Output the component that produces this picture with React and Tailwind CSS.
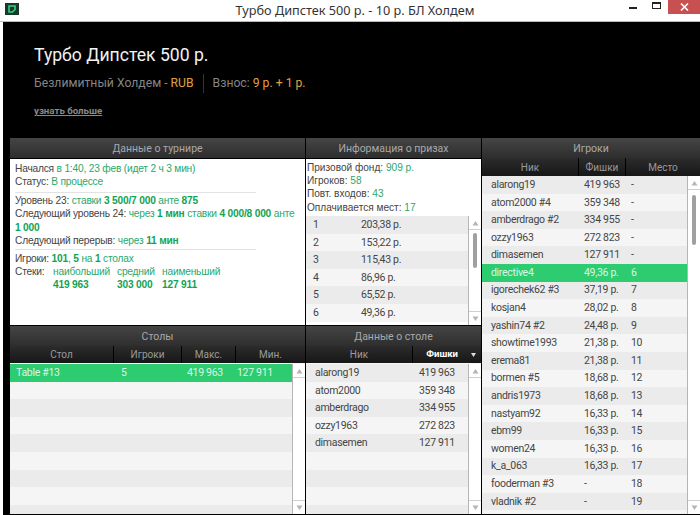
import React from "react";

const G = ({ children }) => <span className="text-[#2aa86c]">{children}</span>;
const B = ({ children }) => <span className="text-[#12a352] font-bold whitespace-nowrap">{children}</span>;

function PanelHeader({ children }) {
  return (
    <div className="h-5 shrink-0 flex items-center justify-center bg-gradient-to-b from-[#454545] to-[#2e2e2e] text-[#a9a9a9] text-[10.5px] pt-px">
      {children}
    </div>
  );
}

function ColHead({ cols, h = "h-[17px]" }) {
  return (
    <div className={`${h} shrink-0 flex bg-gradient-to-b from-[#2c2c2c] to-[#171717] text-[#9a9a9a] text-[10px]`}>
      {cols.map((c, i) => (
        <div key={i} className={`${c.w} flex items-center justify-center border-r border-black last:border-r-0 ${c.cls || ""}`}>
          {c.label}
        </div>
      ))}
    </div>
  );
}

function Scrollbar({ thumb, pt = "pt-[3px]" }) {
  return (
    <div className="w-[13px] shrink-0 bg-white border-l border-[#b5b5b5] flex flex-col">
      <div className="h-[14px] shrink-0 border-b border-[#cfcfcf] flex items-center justify-center text-[#b5b5b5]">
        <svg width="7" height="6"><path d="M3.5 1 L6.5 5.5 L0.5 5.5 Z" fill="currentColor" /></svg>
      </div>
      <div className={`flex-1 min-h-0 px-[4px] ${pt}`}>
        {thumb ? <div className={`${thumb} rounded-[3px] bg-[#a0a0a0]`} /> : null}
      </div>
      <div className="h-[14px] shrink-0 border-t border-[#cfcfcf] flex items-center justify-center text-[#b5b5b5]">
        <svg width="7" height="6"><path d="M0.5 0.5 L6.5 0.5 L3.5 5 Z" fill="currentColor" /></svg>
      </div>
    </div>
  );
}

function Rows({ rows, cols, n, rowH = "h-[17.6px]" }) {
  const list = [];
  for (let i = 0; i < n; i++) list.push(rows[i] || null);
  return (
    <div className="flex-1 min-w-0 overflow-hidden">
      {list.map((r, i) => {
        const sel = r && r.sel;
        const bg = sel ? "bg-[#2ecc71] text-[#d9f7e4]" : i % 2 === 0 ? "bg-[#ebebeb] text-[#454545]" : "bg-[#f5f5f5] text-[#454545]";
        return (
          <div key={i} className={`${rowH} flex items-center text-[10.5px] tracking-[-0.3px] ${bg}`}>
            {r ? r.c.map((t, j) => (
              <div key={j} className={`${cols[j]} whitespace-nowrap`}>{t}</div>
            )) : null}
          </div>
        );
      })}
    </div>
  );
}

const playerData = [
  ["alarong19", "419 963", "-"],
  ["atom2000 #4", "359 348", "-"],
  ["amberdrago #2", "334 955", "-"],
  ["ozzy1963", "272 823", "-"],
  ["dimasemen", "127 911", "-"],
  ["directive4", "49,36 р.", "6"],
  ["igorechek62 #3", "37,19 р.", "7"],
  ["kosjan4", "28,02 р.", "8"],
  ["yashin74 #2", "24,48 р.", "9"],
  ["showtime1993", "21,38 р.", "10"],
  ["erema81", "21,38 р.", "11"],
  ["bormen #5", "18,68 р.", "12"],
  ["andris1973", "18,68 р.", "13"],
  ["nastyam92", "16,33 р.", "14"],
  ["ebm99", "16,33 р.", "15"],
  ["women24", "16,33 р.", "16"],
  ["k_a_063", "16,33 р.", "17"],
  ["fooderman #3", "-", "18"],
  ["vladnik #2", "-", "19"],
].map((c, i) => ({ c, sel: i === 5 }));

const prizes = [
  ["1", "203,38 р."],
  ["2", "153,22 р."],
  ["3", "115,43 р."],
  ["4", "86,96 р."],
  ["5", "65,52 р."],
  ["6", "49,36 р."],
].map((c) => ({ c }));

const seats = [
  ["alarong19", "419 963"],
  ["atom2000", "359 348"],
  ["amberdrago", "334 955"],
  ["ozzy1963", "272 823"],
  ["dimasemen", "127 911"],
].map((c) => ({ c }));

export default function App() {
  return (
    <div className="w-[700px] h-[515px] overflow-hidden flex flex-col bg-white font-['Roboto',sans-serif]">
      <div className="h-[22px] shrink-0 relative flex items-center justify-center bg-white border-b border-[#b9b9b9] pl-[10px]">
        <span className="text-[12.7px] text-[#333] font-['Noto_Sans',sans-serif]">Турбо Дипстек 500 р. - 10 р. БЛ Холдем</span>
        <svg className="absolute left-[5px] top-[3px]" width="14" height="12" viewBox="0 0 14 12">
          <rect width="14" height="12" fill="#173a2a" />
          <path d="M4 3 H10 V6.5 L7.5 9 H4 Z" fill="none" stroke="#35d07f" strokeWidth="1.6" />
        </svg>
        <svg className="absolute left-[629px] top-[6px]" width="8" height="3"><rect y="1" width="8" height="2" fill="#222" /></svg>
        <svg className="absolute left-[652px] top-[2px]" width="10" height="8"><rect x="0.5" y="0.5" width="8" height="6" fill="none" stroke="#222" strokeWidth="1" /><rect x="0" y="0" width="9" height="2" fill="#222" /></svg>
        <div className="absolute right-0 top-0 w-[32px] h-[14px] bg-[#c75050] flex items-center justify-center">
          <svg width="9" height="8" viewBox="0 0 9 8"><path d="M1 0.5 L8 7.5 M8 0.5 L1 7.5" stroke="#fff" strokeWidth="1.6" /></svg>
        </div>
      </div>

      <div className="flex-1 min-h-0 flex flex-col ml-[3px] bg-black pb-[1px]">
        <div className="h-[116px] shrink-0 pl-[31px] pt-[21px]">
          <div className="text-[17.6px] leading-[24px] text-[#f2f2f2]">Турбо Дипстек 500 р.</div>
          <div className="mt-[7px] flex items-center text-[12.2px] h-[19px] text-[#858585]">
            <span>Безлимитный Холдем -&nbsp;</span>
            <span className="text-[#e0a040]">RUB</span>
            <span className="mx-[9px] w-px h-[19px] bg-[#333]" />
            <span>Взнос:&nbsp;</span>
            <span className="text-[#e0a040]">9 р. + 1 р.</span>
          </div>
          <div className="mt-[11px] text-[9.7px] font-bold text-[#8a8a8a] underline">узнать больше</div>
        </div>

        <div className="flex-1 min-h-0 flex pl-[7px] gap-px">
          <div className="w-[295px] shrink-0 flex flex-col">
            <PanelHeader>Данные о турнире</PanelHeader>
            <div className="h-[167px] shrink-0 bg-white px-[5px] pt-[3px] text-[10.2px] tracking-[-0.2px] leading-[13.3px] text-[#444] font-['Liberation_Sans',sans-serif] border-t border-black">
              <div>Начался <G>в 1:40, 23 фев (идет 2 ч 3 мин)</G></div>
              <div>Статус: <G>В процессе</G></div>
              <div className="w-[241px] h-px bg-[#e2e2e2] mt-[3px] mb-[1.5px]" />
              <div>Уровень 23: <G>ставки</G> <B>3 500/7 000</B> <G>анте</G> <B>875</B></div>
              <div>Следующий уровень 24: <G>через</G> <B>1 мин</B> <G>ставки</G> <B>4 000/8 000</B> <G>анте</G> <B>1 000</B></div>
              <div>Следующий перерыв: <G>через</G> <B>11 мин</B></div>
              <div className="w-[241px] h-px bg-[#e2e2e2] mt-[2px] mb-[1.5px]" />
              <div>Игроки: <B>101</B><G>,</G> <B>5</B> <G>на</G> <B>1</B> <G>столах</G></div>
              <div className="flex">
                <div className="w-[38px]">Стеки:</div>
                <div className="w-[64px]"><G>наибольший</G><br /><B>419 963</B></div>
                <div className="w-[45px]"><G>средний</G><br /><B>303 000</B></div>
                <div><G>наименьший</G><br /><B>127 911</B></div>
              </div>
            </div>
            <div className="h-px shrink-0 bg-black" />
            <PanelHeader>Столы</PanelHeader>
            <ColHead cols={[
              { w: "w-[104px]", label: "Стол" },
              { w: "w-[68px]", label: "Игроки" },
              { w: "w-[54px]", label: "Макс." },
              { w: "flex-1", label: "Мин." },
            ]} />
            <div className="flex-1 min-h-0 flex pt-px bg-[#f5f5f5]">
              <Rows
                n={9}
                rows={[{ sel: true, c: ["Table #13", "5", "419 963", "127 911"] }]}
                cols={["w-[111px] pl-[6px]", "w-[66px]", "w-[50px]", "w-[46px]"]}
              />
              <Scrollbar />
            </div>
          </div>

          <div className="w-[175px] shrink-0 flex flex-col">
            <PanelHeader>Информация о призах</PanelHeader>
            <div className="h-[167px] shrink-0 bg-white flex flex-col border-t border-black">
              <div className="h-[57px] shrink-0 px-[1px] pt-[2px] text-[10.1px] leading-[13.2px] text-[#444] font-['Liberation_Sans',sans-serif]">
                <div>Призовой фонд: <G>909 р.</G></div>
                <div>Игроков: <G>58</G></div>
                <div>Повт. входов: <G>43</G></div>
                <div>Оплачивается мест: <G>17</G></div>
              </div>
              <div className="flex-1 min-h-0 flex">
                <Rows rows={prizes} n={6} cols={["w-[55px] pl-[7px]", "flex-1"]} />
                <Scrollbar thumb="h-[35px]" />
              </div>
            </div>
            <div className="h-px shrink-0 bg-black" />
            <PanelHeader>Данные о столе</PanelHeader>
            <ColHead cols={[
              { w: "w-[107px]", label: "Ник" },
              { w: "flex-1", label: <span className="text-white text-[9.5px] font-bold w-full flex items-center justify-end pr-[5px] gap-[13px]"><span>Фишки</span><svg width="5" height="4"><path d="M0 0 H5 L2.5 4 Z" fill="#ddd" /></svg></span> },
            ]} />
            <div className="flex-1 min-h-0 flex pt-px bg-[#f5f5f5]">
              <Rows rows={seats} n={9} cols={["w-[113px] pl-[9px]", "flex-1"]} />
              <Scrollbar />
            </div>
          </div>

          <div className="flex-1 min-w-0 flex flex-col">
            <PanelHeader>Игроки</PanelHeader>
            <ColHead h="h-[18px]" cols={[
              { w: "w-[97px]", label: "Ник" },
              { w: "w-[47px]", label: "Фишки" },
              { w: "flex-1", label: "Место" },
            ]} />
            <div className="flex-1 min-h-0 flex bg-[#f5f5f5]">
              <Rows rows={playerData} n={20} cols={["w-[102px] pl-[9px]", "w-[47px]", "flex-1"]} />
              <Scrollbar thumb="h-[50px]" pt="pt-[5px]" />
            </div>
          </div>
        </div>
      </div>
    </div>
  );
}
